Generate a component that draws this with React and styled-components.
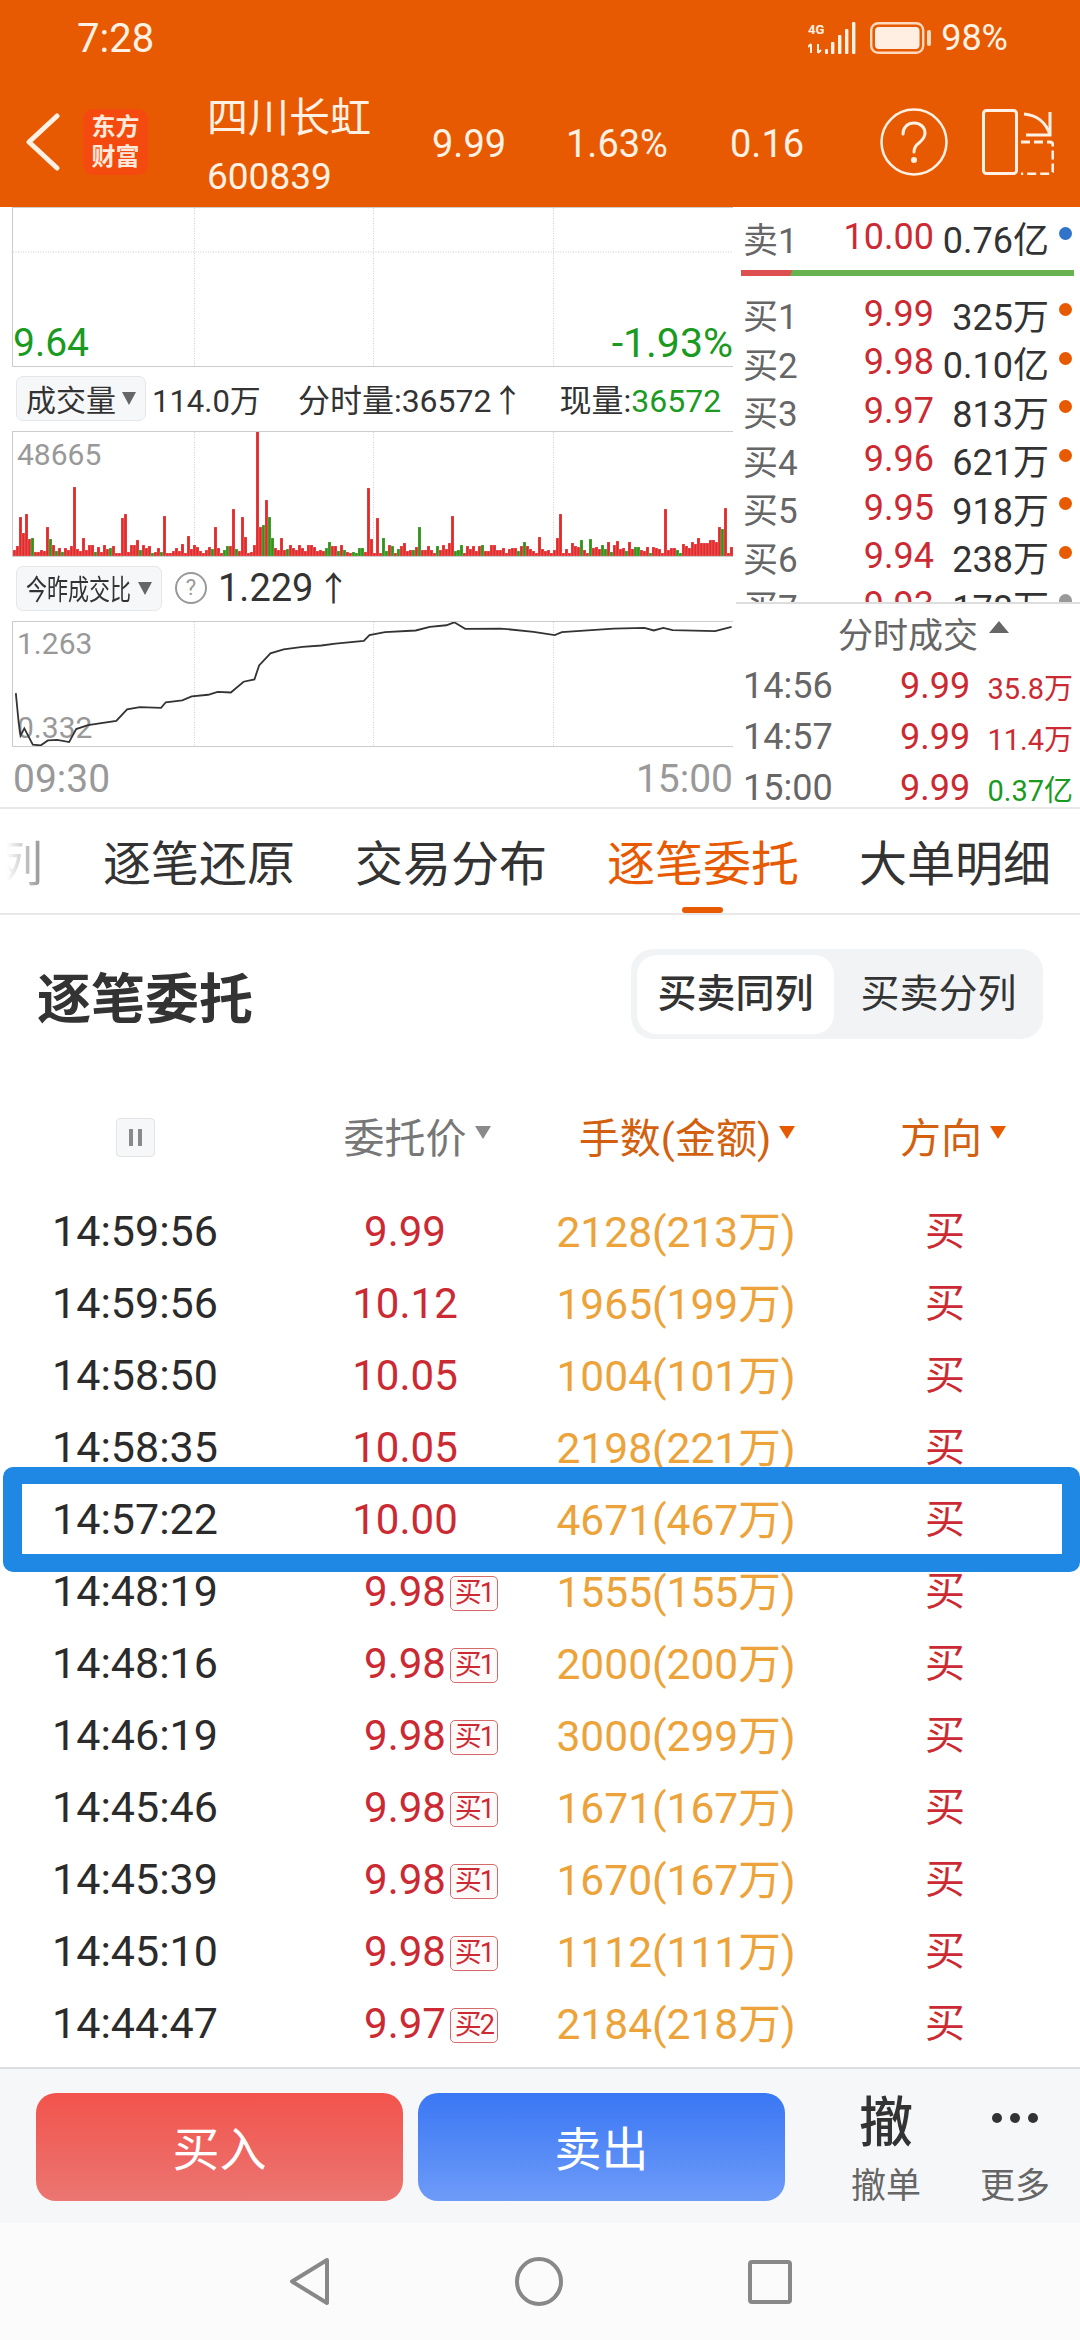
import React from 'react';
import styled, { createGlobalStyle } from 'styled-components';

const FONT = 'Roboto, "Noto Sans CJK SC", sans-serif';
const ORANGE = '#E85A02';
const RED = '#CC2A32';
const GREEN = '#1A9A1F';
const HEADER_TEXT = '#FFF1E4';

const GlobalStyle = createGlobalStyle`
  html, body {
    margin: 0;
    padding: 0;
    background: #fff;
  }
  body {
    font-family: ${FONT};
    color: #333;
  }
`;

const BOOK = [
  { label: '买1', price: '9.99', qty: '325万' },
  { label: '买2', price: '9.98', qty: '0.10亿' },
  { label: '买3', price: '9.97', qty: '813万' },
  { label: '买4', price: '9.96', qty: '621万' },
  { label: '买5', price: '9.95', qty: '918万' },
  { label: '买6', price: '9.94', qty: '238万' },
  { label: '买7', price: '9.93', qty: '178万', dot: '#999' },
];

const TICKS = [
  { time: '14:56', price: '9.99', vol: '35.8万', color: RED },
  { time: '14:57', price: '9.99', vol: '11.4万', color: RED },
  { time: '15:00', price: '9.99', vol: '0.37亿', color: GREEN },
];

const ORDERS = [
  { time: '14:59:56', price: '9.99', amount: '2128(213万)' },
  { time: '14:59:56', price: '10.12', amount: '1965(199万)' },
  { time: '14:58:50', price: '10.05', amount: '1004(101万)' },
  { time: '14:58:35', price: '10.05', amount: '2198(221万)' },
  { time: '14:57:22', price: '10.00', amount: '4671(467万)', marked: true },
  { time: '14:48:19', price: '9.98', badge: '买1', amount: '1555(155万)' },
  { time: '14:48:16', price: '9.98', badge: '买1', amount: '2000(200万)' },
  { time: '14:46:19', price: '9.98', badge: '买1', amount: '3000(299万)' },
  { time: '14:45:46', price: '9.98', badge: '买1', amount: '1671(167万)' },
  { time: '14:45:39', price: '9.98', badge: '买1', amount: '1670(167万)' },
  { time: '14:45:10', price: '9.98', badge: '买1', amount: '1112(111万)' },
  { time: '14:44:47', price: '9.97', badge: '买2', amount: '2184(218万)' },
];

// tall bars read off the reference, index -> height
const SPIKES = {
  2: 39, 3: 23, 4: 42, 5: 17, 11: 29, 20: 69, 23: 18, 36: 38, 37: 42, 41: 16, 50: 40,
  56: 12, 58: 20, 65: 9, 67: 29, 73: 47, 76: 39, 77: 19, 81: 126, 82: 29, 84: 56,
  89: 18, 118: 68, 119: 17, 121: 38, 130: 13, 145: 13, 146: 40, 175: 19, 181: 18,
  182: 42, 186: 13, 198: 14, 201: 15, 205: 14, 217: 47, 223: 12, 224: 10, 226: 14,
  227: 12, 228: 18, 229: 13, 230: 13, 231: 13, 232: 16, 233: 16, 234: 14, 235: 29,
  237: 48, 238: 3, 240: 95,
};
const GREEN_SPIKES = {
  6: 18, 12: 17, 83: 31, 85: 39, 86: 18, 105: 14, 123: 18, 135: 29, 170: 14, 189: 16,
  192: 17, 236: 27,
};

function volumeBars() {
  let seed = 17;
  const bars = [];
  for (let i = 0; i < 240; i++) {
    seed = (seed * 73 + 41) % 1009;
    const base = 3 + (seed % 9);
    const isGreen = i in GREEN_SPIKES || (!(i in SPIKES) && seed % 5 === 0);
    bars.push({ i, h: GREEN_SPIKES[i] || SPIKES[i] || base, green: isGreen });
  }
  return bars;
}

const RATIO_LINE =
  '32,1000 38,1090 42,1130 50,1108 58,1130 68,1158 85,1160 100,1145 120,1143 145,1150 160,1110 185,1098 245,1085 268,1050 295,1043 340,1045 350,1028 385,1022 405,1010 440,1005 460,996 488,998 515,965 538,958 548,915 572,878 600,866 640,858 680,854 710,848 770,840 782,822 815,813 880,808 910,797 945,792 962,783 985,803 1060,802 1130,812 1175,822 1190,813 1300,802 1365,800 1385,808 1405,800 1425,807 1515,810 1550,797';

export default function App() {
  return (
    <>
      <GlobalStyle />
      <Page>
        <Header>
          <StatusBar>
            <Clock>7:28</Clock>
            <StatusIcons>
              <SignalIcon />
              <BatteryIcon />
              <BatteryText>98%</BatteryText>
            </StatusIcons>
          </StatusBar>
          <Toolbar>
            <BackIcon />
            <Logo>东方<br />财富</Logo>
            <StockName>
              <NameText>四川长虹</NameText>
              <CodeText>600839</CodeText>
            </StockName>
            <HeaderQuote $w={134}>9.99</HeaderQuote>
            <HeaderQuote $w={164}>1.63%</HeaderQuote>
            <HeaderQuote $w={150}>0.16</HeaderQuote>
            <HelpIcon />
            <SwitchIcon />
          </Toolbar>
        </Header>

        <Market>
          <ChartColumn>
            <ChartFrame $h={160}>
              <ChartGrid $mid />
              <ChartLabel $left={0} $bottom={-1} $color={GREEN} $size={39}>9.64</ChartLabel>
              <ChartLabel $right={0} $bottom={-2} $color={GREEN} $size={41}>-1.93%</ChartLabel>
            </ChartFrame>
            <IndicatorRow>
              <DropBox $w={130}>
                <DropText>成交量</DropText>
                <DropArrow />
              </DropBox>
              <IndicatorText $gap={6}>114.0万</IndicatorText>
              <IndicatorText $gap={37} $size={32}>分时量:36572↑</IndicatorText>
              <IndicatorText $gap={36} $size={32}>现量:<GreenText>36572</GreenText></IndicatorText>
            </IndicatorRow>
            <ChartFrame $h={126}>
              <ChartGrid />
              <VolumeChart />
              <ChartLabel $left={4} $top={5} $color="#999" $size={30}>48665</ChartLabel>
            </ChartFrame>
            <IndicatorRow>
              <DropBox $w={146}>
                <DropText $squeeze>今昨成交比</DropText>
                <DropArrow />
              </DropBox>
              <SmallHelp>?</SmallHelp>
              <IndicatorText $gap={11} $size={38} $lift={3}>1.229<ArrowMark>↑</ArrowMark></IndicatorText>
            </IndicatorRow>
            <ChartFrame $h={126}>
              <ChartGrid />
              <ChartLabel $left={4} $top={4} $color="#999" $size={30}>1.263</ChartLabel>
              <ChartLabel $left={4} $bottom={0} $color="#999" $size={30}>0.332</ChartLabel>
              <RatioChart />
            </ChartFrame>
            <TimeAxis>
              <span>09:30</span>
              <span>15:00</span>
            </TimeAxis>
          </ChartColumn>

          <SideColumn>
            <OrderBook>
              <BookRow>
                <BookLabel>卖1</BookLabel>
                <BookPrice>10.00</BookPrice>
                <BookQty>0.76亿</BookQty>
                <BookDot $color="#2F74C8" />
              </BookRow>
              <RatioBar />
              {BOOK.map((row) => (
                <BookRow key={row.label}>
                  <BookLabel>{row.label}</BookLabel>
                  <BookPrice>{row.price}</BookPrice>
                  <BookQty>{row.qty}</BookQty>
                  <BookDot $color={row.dot || ORANGE} />
                </BookRow>
              ))}
            </OrderBook>
            <TickPanel>
              <TickTitle>
                分时成交
                <UpArrow />
              </TickTitle>
              {TICKS.map((tick) => (
                <TickRow key={tick.time}>
                  <TickTime>{tick.time}</TickTime>
                  <TickPrice>{tick.price}</TickPrice>
                  <TickVol $color={tick.color}>{tick.vol}</TickVol>
                </TickRow>
              ))}
            </TickPanel>
          </SideColumn>
        </Market>

        <TabBar>
          <FadedTab>量价分列</FadedTab>
          <Tab>逐笔还原</Tab>
          <Tab>交易分布</Tab>
          <Tab $active>逐笔委托</Tab>
          <Tab>大单明细</Tab>
        </TabBar>

        <Content>
          <TitleRow>
            <Title>逐笔委托</Title>
            <Segmented>
              <Segment $active>买卖同列</Segment>
              <Segment $nudge={6}>买卖分列</Segment>
            </Segmented>
          </TitleRow>
          <TableHead>
            <Cell>
              <PauseButton />
            </Cell>
            <Cell><HeadLabel $color="#777" $tri="#8A8A8A">委托价</HeadLabel></Cell>
            <Cell><HeadLabel $color="#D2600F" $tri={ORANGE}>手数(金额)</HeadLabel></Cell>
            <Cell><HeadLabel $color="#D2600F" $tri={ORANGE} $shift={-4}>方向</HeadLabel></Cell>
          </TableHead>
          {ORDERS.map((order, i) => (
            <OrderRow key={i}>
              <Cell><TimeText>{order.time}</TimeText></Cell>
              <Cell>
                <PriceText>
                  {order.price}
                  {order.badge && <LevelBadge>{order.badge}</LevelBadge>}
                </PriceText>
              </Cell>
              <Cell><AmountText>{order.amount}</AmountText></Cell>
              <Cell><SideText>买</SideText></Cell>
              {order.marked && <Highlight />}
            </OrderRow>
          ))}
        </Content>

        <BottomBar>
          <TradeButton $from="#F2534C" $to="#EB7672">买入</TradeButton>
          <TradeButton $from="#3A77F4" $to="#6D9BF8" $gap={15}>卖出</TradeButton>
          <ActionItem $gap={56}>
            <ActionGlyph>撤</ActionGlyph>
            <ActionCaption>撤单</ActionCaption>
          </ActionItem>
          <ActionItem $gap={39}>
            <ActionGlyph><MoreDot /><MoreDot /><MoreDot /></ActionGlyph>
            <ActionCaption>更多</ActionCaption>
          </ActionItem>
        </BottomBar>

        <NavBar>
          <svg width="41" height="49" viewBox="0 0 41 49">
            <path d="M38 3 L3 24.5 L38 46 Z" fill="none" stroke="#888" strokeWidth="4" strokeLinejoin="round" />
          </svg>
          <svg width="48" height="49" viewBox="0 0 48 49">
            <ellipse cx="24" cy="24.5" rx="22" ry="22.5" fill="none" stroke="#888" strokeWidth="4" />
          </svg>
          <svg width="44" height="44" viewBox="0 0 44 44">
            <rect x="2" y="2" width="40" height="40" rx="2" fill="none" stroke="#888" strokeWidth="4" />
          </svg>
        </NavBar>
      </Page>
    </>
  );
}

function SignalIcon() {
  return (
    <SignalSvg width="50" height="32" viewBox="0 0 50 32">
      <text x="0" y="12" fontFamily="Roboto, sans-serif" fontWeight="700" fontSize="13" fill={HEADER_TEXT}>4G</text>
      <path d="M3 22v9M0 25l3-3M10 22v9M10 31l3-3" stroke={HEADER_TEXT} strokeWidth="2" fill="none" />
      <rect x="17" y="27" width="3" height="5" rx="1" fill={HEADER_TEXT} />
      <rect x="23" y="20" width="3.4" height="12" rx="1" fill={HEADER_TEXT} />
      <rect x="30" y="13" width="3.4" height="19" rx="1" fill={HEADER_TEXT} />
      <rect x="37" y="7" width="3.4" height="25" rx="1" fill={HEADER_TEXT} />
      <rect x="44" y="0" width="3.4" height="32" rx="1" fill={HEADER_TEXT} />
    </SignalSvg>
  );
}

function BatteryIcon() {
  return (
    <svg width="61" height="32" viewBox="0 0 61 32">
      <rect x="1.2" y="1.2" width="52" height="29.6" rx="7" fill="none" stroke="#FFD9BD" strokeWidth="2.4" />
      <rect x="5" y="5" width="44.5" height="22" rx="4" fill="#FFEFE3" />
      <rect x="57" y="8" width="4" height="16" rx="2" fill="#FFD9BD" />
    </svg>
  );
}

function BackIcon() {
  return (
    <BackWrap>
      <svg width="36" height="58" viewBox="0 0 36 58">
        <path d="M32 3 L4 29 L32 55" fill="none" stroke="#FFF1E4" strokeWidth="5" strokeLinecap="round" strokeLinejoin="round" />
      </svg>
    </BackWrap>
  );
}

function HelpIcon() {
  return (
    <IconWrap>
      <svg width="68" height="70" viewBox="0 0 68 70">
        <circle cx="34" cy="35" r="32.5" fill="none" stroke={HEADER_TEXT} strokeWidth="2.5" />
        <path d="M23 27c0-7 5-11 11-11s11 4 11 10c0 5-3 7-6 10-3 2-5 4-5 9" fill="none" stroke={HEADER_TEXT} strokeWidth="3" strokeLinecap="round" />
        <circle cx="34" cy="53" r="3" fill={HEADER_TEXT} />
      </svg>
    </IconWrap>
  );
}

function SwitchIcon() {
  return (
    <SwitchWrap>
      <svg width="72" height="66" viewBox="0 0 72 66" fill="none" stroke={HEADER_TEXT}>
        <rect x="1.5" y="1.5" width="33" height="63" rx="3" strokeWidth="3" />
        <path d="M42 5c12 1 22 8 26 21" strokeWidth="3" />
        <path d="M68 3v23H44" strokeWidth="3" />
        <path d="M39 33h29a3 3 0 0 1 3 3v26a3 3 0 0 1-3 3H39" strokeWidth="3" strokeDasharray="9 4" />
      </svg>
    </SwitchWrap>
  );
}

function ChartGrid({ $mid }) {
  return (
    <GridSvg preserveAspectRatio="none" viewBox="0 0 720 160">
      {[181, 360, 540].map((x) => (
        <line key={x} x1={x + 0.5} x2={x + 0.5} y1="0" y2="160" stroke="#cfcfcf" strokeWidth="1" strokeDasharray="1 1.5" vectorEffect="non-scaling-stroke" />
      ))}
      {$mid && <line x1="0" x2="720" y1="44.5" y2="44.5" stroke="#cfcfcf" strokeWidth="1" strokeDasharray="1 1.5" />}
    </GridSvg>
  );
}

function VolumeChart() {
  return (
    <GridSvg viewBox="0 0 720 124">
      {volumeBars().map((bar) => (
        <rect
          key={bar.i}
          x={bar.i * 3}
          y={124 - bar.h}
          width="3"
          height={bar.h}
          fill={bar.green ? '#2F9418' : '#E22A2A'}
          stroke="#fff"
          strokeOpacity="0.35"
          strokeWidth="0.5"
        />
      ))}
    </GridSvg>
  );
}

function RatioChart() {
  return (
    <GridSvg viewBox="26 782 1527 380" preserveAspectRatio="none">
      <polyline points={RATIO_LINE} fill="none" stroke="#333" strokeWidth="1.8" vectorEffect="non-scaling-stroke" />
    </GridSvg>
  );
}

const Page = styled.div`
  width: 1080px;
  height: 2340px;
  overflow: hidden;
  display: flex;
  flex-direction: column;
  background: #fff;
  font-family: ${FONT};
`;

const Header = styled.header`
  height: 207px;
  flex: none;
  background: ${ORANGE};
  color: ${HEADER_TEXT};
`;

const StatusBar = styled.div`
  height: 76px;
  display: flex;
  align-items: center;
  justify-content: space-between;
  padding: 0 72px 0 77px;
`;

const Clock = styled.span`
  font-size: 40px;
`;

const StatusIcons = styled.div`
  display: flex;
  align-items: center;
`;

const SignalSvg = styled.svg`
  margin-right: 12px;
`;

const BatteryText = styled.span`
  font-size: 36px;
  margin-left: 10px;
`;

const Toolbar = styled.div`
  height: 131px;
  display: flex;
  align-items: center;
`;

const BackWrap = styled.div`
  width: 83px;
  padding-left: 25px;
  box-sizing: border-box;
  display: flex;
  align-items: center;
`;

const Logo = styled.div`
  width: 65px;
  height: 66px;
  flex: none;
  box-sizing: border-box;
  padding-top: 3px;
  background: #f4490f;
  border-radius: 10px;
  color: #ffe9da;
  font-size: 24px;
  font-weight: 700;
  line-height: 30px;
  text-align: center;
`;

const StockName = styled.div`
  width: 225px;
  margin-left: 59px;
  align-self: stretch;
  padding-top: 12px;
  box-sizing: border-box;
  flex: none;
`;

const NameText = styled.div`
  font-size: 41px;
  line-height: 60px;
`;

const CodeText = styled.div`
  font-size: 37px;
  line-height: 58px;
`;

const HeaderQuote = styled.div`
  width: ${(p) => p.$w}px;
  flex: none;
  font-size: 38px;
  padding-top: 4px;
`;

const IconWrap = styled.div`
  width: 102px;
  flex: none;
  display: flex;
`;

const SwitchWrap = styled.div`
  flex: none;
  display: flex;
`;

const Market = styled.section`
  height: 602px;
  flex: none;
  display: grid;
  grid-template-columns: 736px 344px;
  border-bottom: 2px solid #e8e8e8;
  box-sizing: border-box;
`;

const ChartColumn = styled.div`
  display: flex;
  flex-direction: column;
  min-width: 0;
`;

const ChartFrame = styled.div`
  position: relative;
  height: ${(p) => p.$h}px;
  margin-left: 12px;
  width: 721px;
  flex: none;
  box-sizing: border-box;
  border-left: 1px solid #ccc;
  border-bottom: 1px solid #ccc;
  border-top: 1px solid #ccc;
`;

const GridSvg = styled.svg`
  position: absolute;
  left: 0;
  top: 0;
  width: 100%;
  height: 100%;
`;

const ChartLabel = styled.span`
  position: absolute;
  ${(p) => p.$left !== undefined && `left: ${p.$left}px;`}
  ${(p) => p.$right !== undefined && `right: ${p.$right}px;`}
  ${(p) => p.$top !== undefined && `top: ${p.$top}px;`}
  ${(p) => p.$bottom !== undefined && `bottom: ${p.$bottom}px;`}
  color: ${(p) => p.$color};
  font-size: ${(p) => p.$size}px;
  line-height: 1.2;
`;

const IndicatorRow = styled.div`
  height: 64px;
  flex: none;
  display: flex;
  align-items: center;
  padding: 0 0 2px 16px;
  box-sizing: border-box;
`;

const DropBox = styled.div`
  width: ${(p) => p.$w}px;
  height: 45px;
  flex: none;
  box-sizing: border-box;
  padding: 0 9px;
  display: flex;
  align-items: center;
  justify-content: space-between;
  background: #f6f7f9;
  border: 1px solid #e4e6e8;
  border-radius: 7px;
`;

const DropText = styled.span`
  font-size: 30px;
  color: #333;
  white-space: nowrap;
  ${(p) => p.$squeeze && `
    font-size: 28px;
    display: inline-block;
    width: 105px;
    transform: scaleX(0.75);
    transform-origin: left center;
  `}
`;

const DropArrow = styled.i`
  width: 0;
  height: 0;
  border-left: 7px solid transparent;
  border-right: 7px solid transparent;
  border-top: 13px solid #666;
`;

const IndicatorText = styled.span`
  margin-left: ${(p) => p.$gap}px;
  margin-bottom: ${(p) => p.$lift || 0}px;
  font-size: ${(p) => p.$size || 31}px;
  color: #333;
  white-space: nowrap;
`;

const ArrowMark = styled.span`
  display: inline-block;
  font-size: 34px;
  margin-left: 3px;
`;

const GreenText = styled.span`
  color: ${GREEN};
`;

const SmallHelp = styled.span`
  width: 28px;
  height: 28px;
  margin-left: 13px;
  flex: none;
  border: 2.5px solid #999;
  border-radius: 50%;
  color: #999;
  font-size: 22px;
  line-height: 28px;
  text-align: center;
`;

const TimeAxis = styled.div`
  height: 60px;
  display: flex;
  justify-content: space-between;
  align-items: center;
  padding: 4px 3px 0 13px;
  box-sizing: border-box;
  font-size: 39px;
  color: #999;
`;

const SideColumn = styled.div`
  display: flex;
  flex-direction: column;
  min-width: 0;
`;

const OrderBook = styled.div`
  height: 397px;
  flex: none;
  overflow: hidden;
  box-sizing: border-box;
  padding: 4px 0 0 7px;
  border-bottom: 2px solid #ddd;
`;

const BookRow = styled.div`
  height: 48.5px;
  display: grid;
  grid-template-columns: 70px 121px 115px 30px;
  align-items: center;
`;

const BookLabel = styled.span`
  font-size: 35px;
  color: #666;
  white-space: nowrap;
`;

const BookPrice = styled.span`
  font-size: 36px;
  color: ${RED};
  text-align: right;
`;

const BookQty = styled.span`
  font-size: 36px;
  color: #333;
  text-align: right;
  white-space: nowrap;
`;

const BookDot = styled.i`
  width: 13px;
  height: 13px;
  margin: -8px 0 0 10px;
  border-radius: 50%;
  background: ${(p) => p.$color};
`;

const RatioBar = styled.div`
  height: 6px;
  width: 333px;
  margin: 10px 0 12px -2px;
  background: linear-gradient(110deg, #de4f4f 15%, #66b34f 15.6%);
`;

const TickPanel = styled.div`
  flex: 1;
  box-sizing: border-box;
  padding-left: 7px;
`;

const TickTitle = styled.div`
  height: 56px;
  display: flex;
  align-items: center;
  padding-left: 95px;
  font-size: 35px;
  color: #666;
`;

const UpArrow = styled.i`
  width: 0;
  height: 0;
  margin: -10px 0 0 11px;
  border-left: 10px solid transparent;
  border-right: 10px solid transparent;
  border-bottom: 12px solid #666;
`;

const TickRow = styled.div`
  height: 51px;
  display: grid;
  grid-template-columns: 157px 72px 1fr;
  align-items: center;
  padding-right: 7px;
`;

const TickTime = styled.span`
  font-size: 36px;
  color: #666;
`;

const TickPrice = styled.span`
  font-size: 36px;
  color: ${RED};
`;

const TickVol = styled.span`
  font-size: 29px;
  color: ${(p) => p.$color};
  text-align: right;
  white-space: nowrap;
`;

const TabBar = styled.nav`
  height: 106px;
  flex: none;
  margin-left: -149px;
  display: flex;
  gap: 60px;
  border-bottom: 2px solid #e8e8e8;
  box-sizing: border-box;
  white-space: nowrap;
`;

const Tab = styled.div`
  position: relative;
  width: 192px;
  flex: none;
  font-size: 48px;
  line-height: 112px;
  color: ${(p) => (p.$active ? ORANGE : '#333')};
  ${(p) => p.$active && `
    &::after {
      content: '';
      position: absolute;
      left: 75px;
      bottom: 0;
      width: 41px;
      height: 6px;
      border-radius: 3px;
      background: ${ORANGE};
    }
  `}
`;

const FadedTab = styled(Tab)`
  -webkit-mask-image: linear-gradient(to right, transparent 81%, rgba(0, 0, 0, 0.55) 100%);
  mask-image: linear-gradient(to right, transparent 81%, rgba(0, 0, 0, 0.55) 100%);
`;

const Content = styled.main`
  flex: 1;
  min-height: 0;
`;

const TitleRow = styled.div`
  display: flex;
  align-items: center;
  justify-content: space-between;
  padding: 34px 37px 0;
`;

const Title = styled.h2`
  margin: 2px 0 0;
  font-size: 54px;
  font-weight: 700;
  color: #333;
`;

const Segmented = styled.div`
  width: 412px;
  height: 90px;
  box-sizing: border-box;
  padding: 6px;
  display: grid;
  grid-template-columns: 197px 1fr;
  background: #f2f3f5;
  border-radius: 22px;
`;

const Segment = styled.div`
  padding-left: ${(p) => p.$nudge || 0}px;
  border-radius: 20px;
  background: ${(p) => (p.$active ? '#fff' : 'transparent')};
  font-size: 39px;
  font-weight: ${(p) => (p.$active ? 500 : 400)};
  color: #333;
  line-height: 79px;
  text-align: center;
`;

const tableColumns = `
  display: grid;
  grid-template-columns: repeat(4, 270px);
  align-items: center;
`;

const TableHead = styled.div`
  ${tableColumns}
  height: 116px;
  margin-top: 40px;
  padding-bottom: 4px;
  box-sizing: border-box;
`;

const Cell = styled.div`
  display: flex;
  justify-content: center;
  align-items: center;
`;

const PauseButton = styled.div`
  width: 39px;
  height: 39px;
  margin-top: 4px;
  box-sizing: border-box;
  border: 1px solid #e2e4e8;
  border-radius: 4px;
  background:
    linear-gradient(#8a8a8a, #8a8a8a) 12px 10px / 4px 17px no-repeat,
    linear-gradient(#8a8a8a, #8a8a8a) 21px 10px / 4px 17px no-repeat,
    #f6f7f9;
`;

const HeadLabel = styled.span`
  position: relative;
  left: ${(p) => p.$shift || 0}px;
  font-size: 41px;
  color: ${(p) => p.$color};
  white-space: nowrap;
  &::after {
    content: '';
    position: absolute;
    left: calc(100% + 8px);
    top: 21px;
    border-left: 8px solid transparent;
    border-right: 8px solid transparent;
    border-top: 13px solid ${(p) => p.$tri};
  }
`;

const OrderRow = styled.div`
  ${tableColumns}
  position: relative;
  height: 72px;
`;

const TimeText = styled.span`
  font-size: 43px;
  color: #2b2b2b;
`;

const PriceText = styled.span`
  position: relative;
  font-size: 42px;
  color: ${RED};
`;

const LevelBadge = styled.span`
  position: absolute;
  left: calc(100% + 4px);
  top: 9px;
  width: 48px;
  height: 35px;
  box-sizing: border-box;
  border: 1px solid #d26a6e;
  border-radius: 5px;
  background: #fffafa;
  font-size: 27px;
  line-height: 32px;
  text-align: center;
  letter-spacing: -2px;
  white-space: nowrap;
`;

const AmountText = styled.span`
  margin: -6px 0 0 2px;
  font-size: 42.5px;
  color: #eba33a;
  white-space: nowrap;
`;

const SideText = styled.span`
  margin-top: -6px;
  font-size: 40px;
  color: ${RED};
`;

const Highlight = styled.div`
  position: absolute;
  top: -16px;
  bottom: -17px;
  left: 3px;
  right: 0;
  border: solid #1f88e5;
  border-width: 17px 18px 18px 19px;
  border-radius: 10px;
`;

const BottomBar = styled.footer`
  height: 156px;
  flex: none;
  box-sizing: border-box;
  display: flex;
  align-items: flex-start;
  padding: 24px 0 0 36px;
  background: #f6f7f9;
  border-top: 2px solid #dcdfe2;
`;

const TradeButton = styled.button`
  width: 367px;
  height: 108px;
  flex: none;
  margin-left: ${(p) => p.$gap || 0}px;
  padding-bottom: 4px;
  border: 0;
  border-radius: 20px;
  background: linear-gradient(${(p) => p.$from}, ${(p) => p.$to});
  color: #fff;
  font-family: ${FONT};
  font-size: 47px;
`;

const ActionItem = styled.div`
  width: 90px;
  flex: none;
  margin-left: ${(p) => p.$gap}px;
  display: flex;
  flex-direction: column;
  align-items: center;
`;

const ActionGlyph = styled.div`
  height: 50px;
  display: flex;
  align-items: center;
  gap: 8px;
  font-size: 54px;
  font-weight: 500;
  color: #333;
`;

const MoreDot = styled.i`
  width: 10px;
  height: 10px;
  border-radius: 50%;
  background: #333;
`;

const ActionCaption = styled.div`
  margin-top: 24px;
  font-size: 35px;
  line-height: 40px;
  color: #666;
  white-space: nowrap;
`;

const NavBar = styled.div`
  height: 117px;
  flex: none;
  display: flex;
  align-items: center;
  justify-content: center;
  gap: 185px;
  background: #fbfbfb;
`;
